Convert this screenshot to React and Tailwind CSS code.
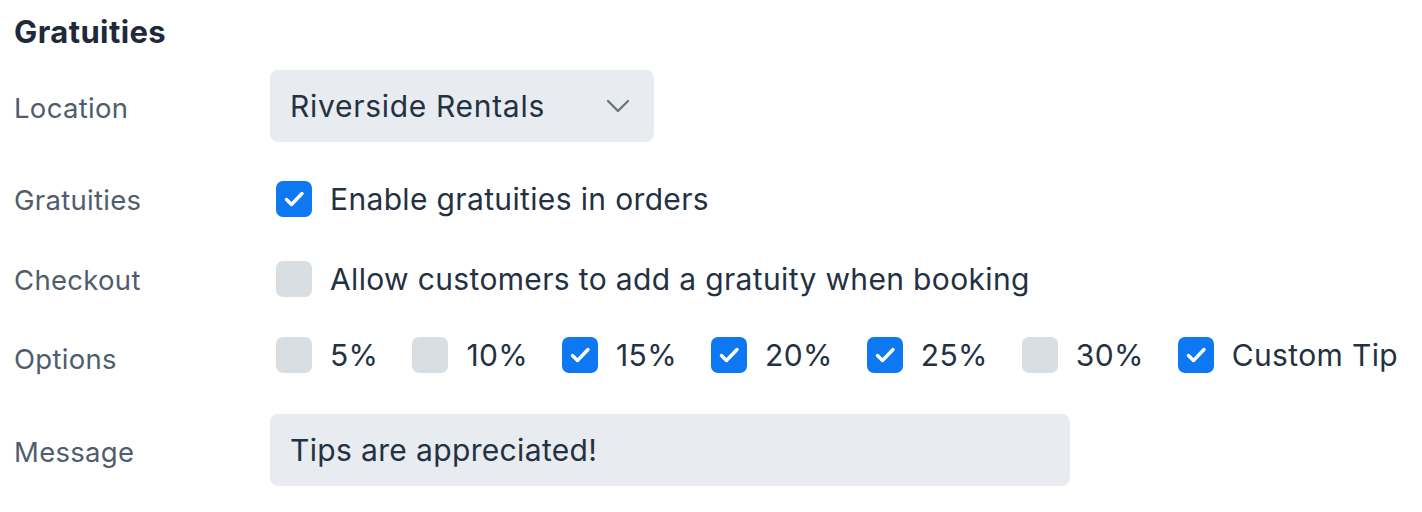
import React from 'react';

const Check = ({ checked }) => (
  <span
    className={
      'flex h-[36px] w-[36px] shrink-0 items-center justify-center rounded-[7px] ' +
      (checked ? 'bg-[#0d78f2]' : 'bg-[#d9dee3]')
    }
  >
    {checked && (
      <svg width="36" height="36" viewBox="0 0 36 36" fill="none">
        <path d="M10.5 18.5l5 5L26 12.5" stroke="white" strokeWidth="3.4" strokeLinecap="round" strokeLinejoin="round" />
      </svg>
    )}
  </span>
);

const Row = ({ label, labelClass = '', className = '', children }) => (
  <div className={'flex items-center ' + className}>
    <div className={'w-[256px] shrink-0 text-[27.5px] leading-[36px] tracking-[0.3px] text-[#4f5d6e] ' + labelClass}>{label}</div>
    {children}
  </div>
);

const options = [
  { label: '5%', checked: false },
  { label: '10%', checked: false },
  { label: '15%', checked: true },
  { label: '20%', checked: true },
  { label: '25%', checked: true },
  { label: '30%', checked: false },
  { label: 'Custom Tip', checked: true },
];

const text = 'text-[30px] leading-[36px] tracking-[0.35px]';

export default function App() {
  return (
    <div className="bg-white h-[512px] pl-[14px] pt-[14px] text-[#243142]" style={{ fontFamily: 'Inter, "Noto Sans", sans-serif' }}>
      <h2 className="text-[31px] leading-[36px] font-bold tracking-[0.4px] text-[#1e2a3a]">Gratuities</h2>

      <Row label="Location" labelClass="mt-[4px]" className="mt-[20px] h-[72px]">
        <div className="flex h-[72px] w-[384px] items-center justify-between rounded-[8px] bg-[#e8ebef] pl-[20px] pr-[24px]">
          <span className="text-[30px] leading-[36px] tracking-[0.7px]">Riverside Rentals</span>
          <svg width="24" height="14" viewBox="0 0 24 14" fill="none">
            <path d="M2 2l10 10L22 2" stroke="#6b7684" strokeWidth="2.4" strokeLinecap="round" strokeLinejoin="round" />
          </svg>
        </div>
      </Row>

      <Row label="Gratuities" labelClass="mt-[2px]" className="mt-[39px] h-[36px]">
        <div className="flex items-center pl-[6px]">
          <Check checked />
          <span className={'ml-[18px] ' + text}>Enable gratuities in orders</span>
        </div>
      </Row>

      <Row label="Checkout" labelClass="mt-[2px]" className="mt-[44px] h-[36px]">
        <div className="flex items-center pl-[6px]">
          <Check checked={false} />
          <span className={'ml-[18px] ' + text}>Allow customers to add a gratuity when booking</span>
        </div>
      </Row>

      <Row label="Options" labelClass="mt-[8px]" className="mt-[40px] h-[36px]">
        <div className="flex items-center gap-[34px] pl-[6px]">
          {options.map((o) => (
            <div key={o.label} className="flex items-center">
              <Check checked={o.checked} />
              <span className={'ml-[18px] ' + text}>{o.label}</span>
            </div>
          ))}
        </div>
      </Row>

      <Row label="Message" labelClass="mt-[4px]" className="mt-[41px] h-[72px]">
        <div className="flex h-[72px] w-[800px] items-center rounded-[8px] bg-[#e8ebef] pl-[20px]">
          <span className={text}>Tips are appreciated!</span>
        </div>
      </Row>
    </div>
  );
}
